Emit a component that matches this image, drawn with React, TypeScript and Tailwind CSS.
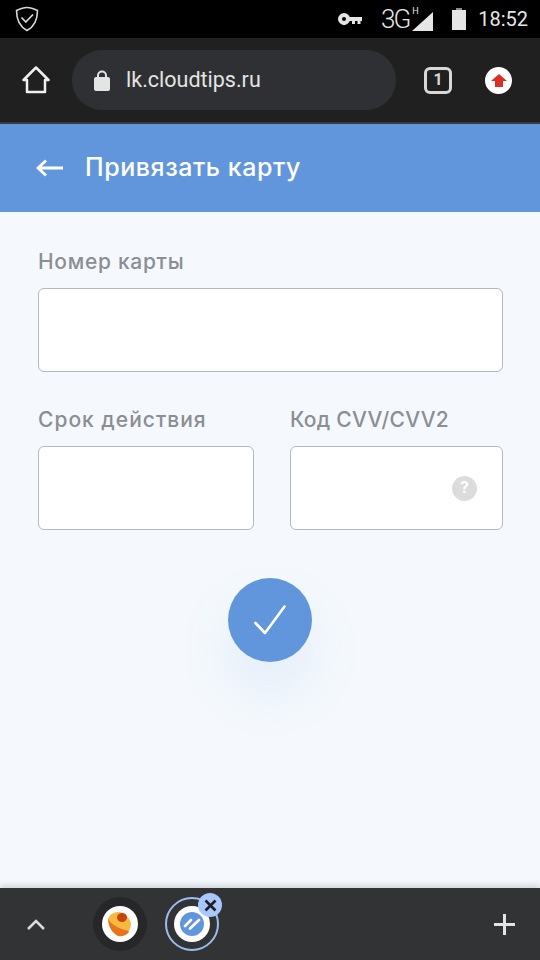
function StatusBar() {
  return (
    <div className="flex h-[38px] items-center justify-between bg-black pl-[15px] pr-[12px] text-[#e6e6e6]">
      <svg width="24" height="26" viewBox="0 0 24 26" fill="none" stroke="#d8d8d8" strokeLinejoin="round">
        <path d="M12 1.500C8.500 1.500 5 2.800 1.500 4.500 1.500 12 3.500 20 12 24.500 20.500 20 22.500 12 22.500 4.500 19 2.800 15.500 1.500 12 1.500Z" strokeWidth="1.600" />
        <path d="M6.500 11.500 10.800 16 18 8.500" strokeWidth="1.800" />
      </svg>
      <div className="flex items-center">
        <svg width="24" height="12" viewBox="0 0 24 12" fill="#e6e6e6">
          <path d="M6 0a6 6 0 1 1-5.500 8.200A6 6 0 0 1 6 0Zm0 4a2 2 0 1 0 0 4 2 2 0 0 0 0-4Z" fillRule="evenodd" />
          <path d="M11 4h13v4h-1.500v3h-3V8H17v3h-3V8h-3Z" />
        </svg>
        <span className="ml-[19px] font-['Roboto',sans-serif] text-[26px] font-light leading-none tracking-[-2px]">3G</span>
        <div className="relative h-[26px] w-[25px]">
          <span className="absolute left-[3px] top-[1px] font-['Roboto',sans-serif] text-[9px] leading-none">H</span>
          <svg className="absolute bottom-[1px] left-[3px]" width="21" height="19" viewBox="0 0 21 19" fill="#e6e6e6">
            <path d="M21 0v19H0Z" />
          </svg>
        </div>
        <svg className="ml-[18px]" width="14" height="22" viewBox="0 0 14 22">
          <path d="M4 0h6v2H4Z" fill="#8a8a8a" />
          <path d="M0 2h14v20H0Z" fill="#e6e6e6" />
        </svg>
        <span className="ml-[12px] font-['Roboto',sans-serif] text-[20px] leading-none">18:52</span>
      </div>
    </div>
  );
}

function Toolbar() {
  return (
    <div className="flex h-[86px] items-center border-b-2 border-[#3a3c3f] bg-[#202020]">
      <div className="flex w-[72px] justify-center">
        <svg width="28" height="28" viewBox="0 0 28 28" fill="none" stroke="#f0f0f0" strokeWidth="2.500" strokeLinejoin="round" strokeLinecap="round">
          <path d="M1.500 14 14 1.500 26.500 14H23V26H5V14Z" />
        </svg>
      </div>
      <div className="flex h-[60px] w-[324px] items-center rounded-full bg-[#2f3033] pl-[22px] text-[#e8e8e8]">
        <svg width="16" height="21" viewBox="0 0 16 21">
          <path d="M4 8V5.500a4 4 0 0 1 8 0V8" fill="none" stroke="#e4e4e4" strokeWidth="2" />
          <rect x="0" y="7" width="16" height="14" rx="2" fill="#e4e4e4" />
        </svg>
        <span className="ml-[16px] font-['Roboto',sans-serif] text-[21.500px] text-[#e4e4e4]">lk.cloudtips.ru</span>
      </div>
      <div className="ml-[28px] flex h-[27px] w-[28px] items-center justify-center rounded-[6px] border-[3px] border-[#d8d8d8] font-['Roboto',sans-serif] text-[16px] font-bold text-[#d8d8d8]">
        1
      </div>
      <div className="ml-[33px] flex h-[27px] w-[27px] items-center justify-center rounded-full bg-white">
        <svg width="16" height="13" viewBox="0 0 16 13" fill="#d93025">
          <path d="M8 0 16 7H12V13H4V7H0Z" />
        </svg>
      </div>
    </div>
  );
}

function Field({ label, className, labelClass, children }: { label: string; className?: string; labelClass: string; children?: React.ReactNode }) {
  return (
    <div className={className}>
      <div className={`h-[26px] font-['Inter',sans-serif] text-[21px] font-medium leading-[26px] text-[#8b8e93] ${labelClass}`}>{label}</div>
      <div className="mt-[13px] flex h-[84px] items-center justify-end rounded-[6px] border border-[#b4b8bf] bg-white pr-[25px]">
        {children}
      </div>
    </div>
  );
}

export default function App() {
  return (
    <div className="flex h-[960px] w-[540px] flex-col overflow-hidden bg-[#f5f9fd]">
      <StatusBar />
      <Toolbar />
      <header className="flex h-[88px] items-center bg-[#6196dc] pl-[36px] text-white">
        <svg width="27" height="18" viewBox="0 0 27 18" fill="none" stroke="white" strokeWidth="2.800">
          <path d="M27 9H2M10 1.500 2 9l8 7.500" />
        </svg>
        <h1 className="ml-[22px] font-['Inter',sans-serif] text-[25px] font-medium tracking-[0.55px]">Привязать карту</h1>
      </header>
      <main className="flex flex-1 flex-col pl-[38px] pr-[37px] pt-[37px]">
        <Field label="Номер карты" labelClass="tracking-[0.700px]" />
        <div className="mt-[35px] flex gap-[36px]">
          <Field label="Срок действия" labelClass="tracking-[1px]" className="w-[216px]" />
          <Field label="Код CVV/CVV2" labelClass="tracking-[0.250px]" className="w-[213px]">
            <div className="flex h-[25px] w-[25px] items-center justify-center rounded-full bg-[#dcdcdc] font-['Roboto',sans-serif] text-[17px] font-bold text-white">?</div>
          </Field>
        </div>
        <button className="ml-[190px] mt-[48px] flex h-[84px] w-[84px] items-center justify-center rounded-full bg-[#6196dc] shadow-[0_30px_50px_5px_rgba(97,150,220,0.1)]">
          <svg width="32" height="30" viewBox="0 0 32 30" fill="none" stroke="white" strokeWidth="2.600" strokeLinecap="round" strokeLinejoin="round">
            <path d="M1.500 18 11 28 30.500 1.500" />
          </svg>
        </button>
      </main>
      <footer className="flex h-[72px] items-center bg-[#323335] shadow-[0_-3px_6px_rgba(0,0,0,0.15)]">
        <svg className="ml-[27px]" width="18" height="11" viewBox="0 0 18 11" fill="none" stroke="#dcdcdc" strokeWidth="2.500">
          <path d="M1 10 9 2l8 8" />
        </svg>
        <div className="ml-[48px] flex h-[54px] w-[54px] items-center justify-center rounded-full bg-[#262729]">
          <div className="flex h-[36px] w-[36px] items-center justify-center rounded-full bg-white">
            <svg width="28" height="28" viewBox="0 0 28 28">
              <path d="M2 9c5 0 12 3 18 9 2 2 3 3 3 4-3 4-8 5-11 4C6 23 2 16 2 9Z" fill="#e8731a" />
              <path d="M2 9c1-4 6-7 10-7 6 0 11 5 13 11 0 3-1 6-2 8-6-1-11-3-15-6-3-2-5-4-6-6Z" fill="#f6b93f" />
              <ellipse cx="16" cy="7.500" rx="5" ry="4.500" fill="#c9430f" />
            </svg>
          </div>
        </div>
        <div className="relative ml-[18px] flex h-[54px] w-[54px] items-center justify-center rounded-full border-[2.500px] border-[#9dbdf0]">
          <div className="flex h-[36px] w-[36px] items-center justify-center rounded-full bg-white">
            <div className="flex h-[24px] w-[24px] items-center justify-center rounded-full bg-[#6196dc]">
              <svg width="18" height="12" viewBox="0 0 18 12" fill="none" stroke="white" strokeWidth="2.600" strokeLinecap="round">
                <path d="M2 8 8 2M7 10.500 16 2" />
              </svg>
            </div>
          </div>
          <div className="absolute right-[-5px] top-[-6px] flex h-[24px] w-[24px] items-center justify-center rounded-full bg-[#a8c7fa]">
            <svg width="13" height="13" viewBox="0 0 13 13" fill="none" stroke="#1f2024" strokeWidth="2.600">
              <path d="M1.500 1.500l10 10M11.500 1.500l-10 10" />
            </svg>
          </div>
        </div>
        <svg className="ml-auto mr-[25px]" width="21" height="21" viewBox="0 0 21 21" fill="#e4e4e4">
          <path d="M9 0h3v9h9v3h-9v9H9v-9H0V9h9Z" />
        </svg>
      </footer>
    </div>
  );
}
